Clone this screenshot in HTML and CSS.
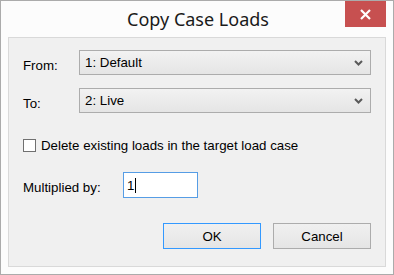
FILE: index.html
```html
<!DOCTYPE html>
<html lang="en">
<head>
  <meta charset="UTF-8" />
  <title>Copy Case Loads</title>
  <link rel="stylesheet" href="styles.css">
</head>
<body>

  <div class="window">
    <div class="titlebar">
      <div class="title">Copy Case Loads</div>
      <div class="close" aria-label="Close">
        <svg width="13" height="11" viewBox="0 0 13 11">
          <path d="M2 1 L11 10 M11 1 L2 10" stroke="#fff" stroke-width="2.2" fill="none"/>
        </svg>
      </div>
    </div>

    <div class="client">
      <div class="row">
        <span class="label">From:</span>
        <div class="combo">
          <span>1: Default</span>
          <svg class="chev" width="9" height="6" viewBox="0 0 9 6">
            <path d="M1 1 L4.5 4.5 L8 1" stroke="#5a5a5a" stroke-width="2" fill="none"/>
          </svg>
        </div>
      </div>
      <div class="row">
        <span class="label">To:</span>
        <div class="combo">
          <span>2: Live</span>
          <svg class="chev" width="9" height="6" viewBox="0 0 9 6">
            <path d="M1 1 L4.5 4.5 L8 1" stroke="#5a5a5a" stroke-width="2" fill="none"/>
          </svg>
        </div>
      </div>

      <label class="check">
        <span class="box"></span>
        <span>Delete existing loads in the target load case</span>
      </label>

      <div class="row multi">
        <span class="label wide">Multiplied by:</span>
        <div class="field"><span>1</span><span class="caret"></span></div>
      </div>

      <div class="buttons">
        <div class="btn default">OK</div>
        <div class="btn">Cancel</div>
      </div>
    </div>
  </div>

</body>
</html>
```

FILE: styles.css
```css
/* Reset */
* {
  box-sizing: border-box;
  margin: 0;
  padding: 0;
}
body {
  font-family: 'Liberation Sans', Arial, sans-serif;
  font-size: 13.3px;
  color: #000;
  background: #fff;
}

.window {
  width: 394px;
  height: 275px;
  border: 1px solid #ababab;
  background: #fcfcfc;
  display: flex;
  flex-direction: column;
}

.titlebar {
  height: 36px;
  display: flex;
  justify-content: center;
  position: relative;
}
.title {
  font-family: 'Noto Sans', sans-serif;
  font-size: 18px;
  line-height: 36px;
  color: #1a1a1a;
  padding-left: 2px;
}
.close {
  position: absolute;
  top: 0;
  right: 7px;
  width: 41px;
  height: 26px;
  background: #c75050;
  display: flex;
  align-items: center;
  justify-content: center;
}

.client {
  margin: 0 7px 7px;
  flex: 1;
  background: #f0f0f0;
  border: 1px solid #d9d9d9;
  padding: 12px 14px 0 14px;
  display: flex;
  flex-direction: column;
}

.row {
  display: flex;
  align-items: center;
  height: 25px;
  margin-bottom: 13px;
}
.label {
  width: 56px;
  padding-top: 6px;
}
.label.wide {
  width: 100px;
  padding-top: 4px;
}

.combo {
  flex: 1;
  height: 25px;
  border: 1px solid #acacac;
  background: linear-gradient(#f2f2f2, #e5e5e5);
  display: flex;
  align-items: center;
  justify-content: space-between;
  padding: 0 7px 0 5px;
}
.chev {
  margin-top: 1px;
}

.check {
  display: flex;
  align-items: center;
  gap: 5px;
  margin-top: 13px;
  height: 13px;
}
.box {
  width: 13px;
  height: 13px;
  border: 1px solid #707070;
  background: #fff;
}

.multi {
  margin-top: 20px;
  height: 26px;
}
.field {
  width: 75px;
  height: 26px;
  border: 1px solid #569de5;
  background: #fff;
  display: flex;
  align-items: center;
  padding-left: 3px;
}
.caret {
  width: 1px;
  height: 15px;
  background: #000;
  margin-left: 1px;
}

.buttons {
  display: flex;
  justify-content: flex-end;
  gap: 12px;
  margin-top: 12px;
}
.btn {
  width: 98px;
  height: 26px;
  border: 1px solid #acacac;
  background: linear-gradient(#f0f0f0, #e5e5e5);
  display: flex;
  align-items: center;
  justify-content: center;
}
.btn.default {
  border-color: #3399ff;
}
```
